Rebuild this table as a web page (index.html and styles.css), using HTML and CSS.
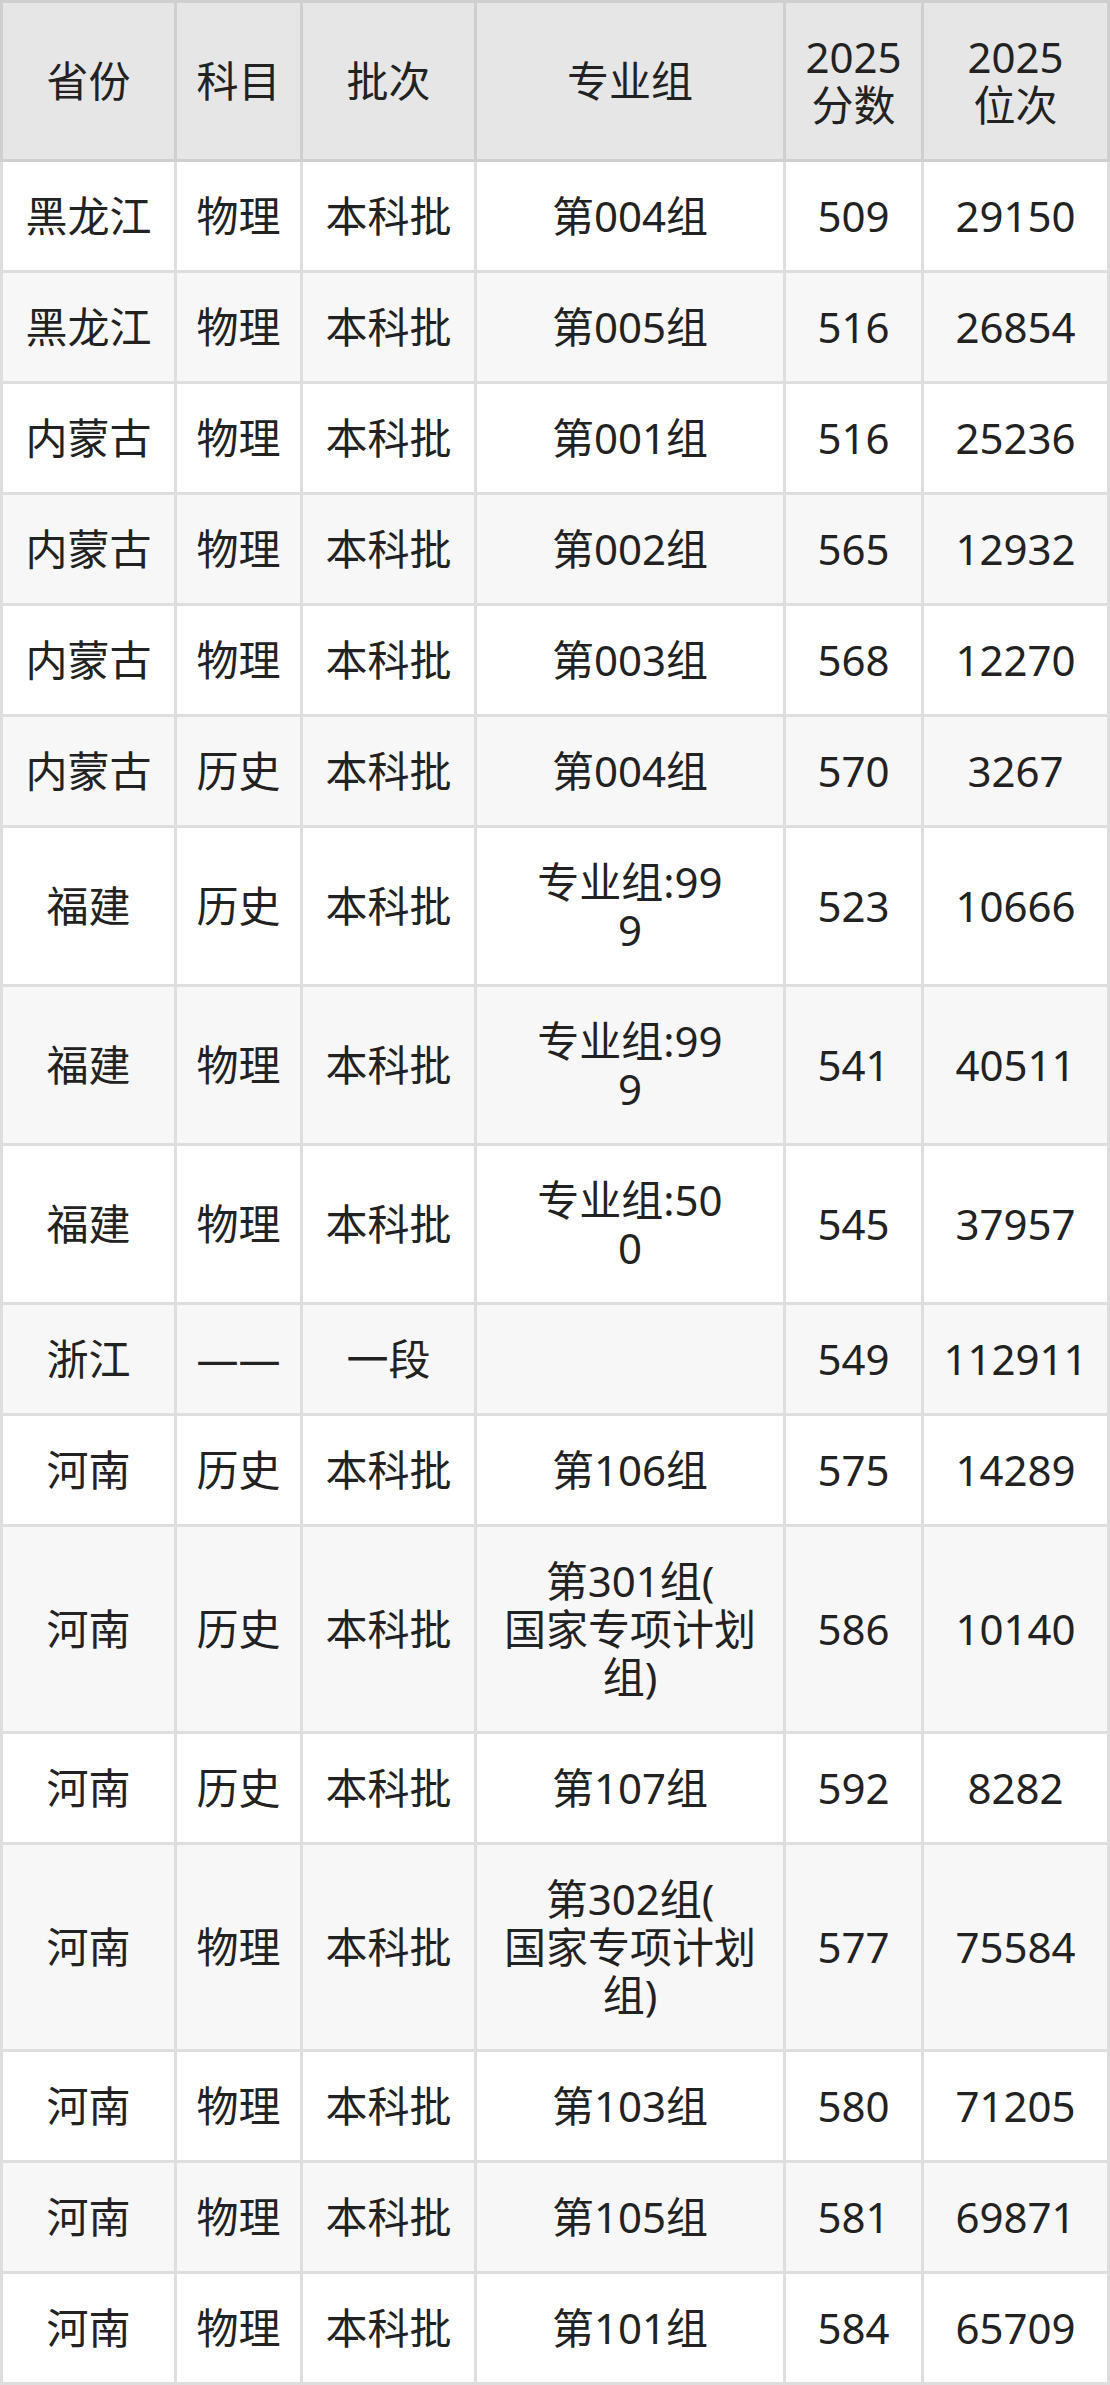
FILE: index.html
```html
<!DOCTYPE html>
<html lang="zh-CN">
<head>
<meta charset="utf-8">
<title>2025 分数位次</title>
<link rel="stylesheet" href="styles.css">
</head>
<body>
<table class="score-table">
  <colgroup>
    <col class="c-prov">
    <col class="c-subj">
    <col class="c-batch">
    <col class="c-group">
    <col class="c-score">
    <col class="c-rank">
  </colgroup>
  <thead>
    <tr>
      <th>省份</th>
      <th>科目</th>
      <th>批次</th>
      <th>专业组</th>
      <th>2025<br>分数</th>
      <th>2025<br>位次</th>
    </tr>
  </thead>
  <tbody>
    <tr><td>黑龙江</td><td>物理</td><td>本科批</td><td>第004组</td><td>509</td><td>29150</td></tr>
    <tr><td>黑龙江</td><td>物理</td><td>本科批</td><td>第005组</td><td>516</td><td>26854</td></tr>
    <tr><td>内蒙古</td><td>物理</td><td>本科批</td><td>第001组</td><td>516</td><td>25236</td></tr>
    <tr><td>内蒙古</td><td>物理</td><td>本科批</td><td>第002组</td><td>565</td><td>12932</td></tr>
    <tr><td>内蒙古</td><td>物理</td><td>本科批</td><td>第003组</td><td>568</td><td>12270</td></tr>
    <tr><td>内蒙古</td><td>历史</td><td>本科批</td><td>第004组</td><td>570</td><td>3267</td></tr>
    <tr><td>福建</td><td>历史</td><td>本科批</td><td>专业组:99<br>9</td><td>523</td><td>10666</td></tr>
    <tr><td>福建</td><td>物理</td><td>本科批</td><td>专业组:99<br>9</td><td>541</td><td>40511</td></tr>
    <tr><td>福建</td><td>物理</td><td>本科批</td><td>专业组:50<br>0</td><td>545</td><td>37957</td></tr>
    <tr><td>浙江</td><td>——</td><td>一段</td><td></td><td>549</td><td>112911</td></tr>
    <tr><td>河南</td><td>历史</td><td>本科批</td><td>第106组</td><td>575</td><td>14289</td></tr>
    <tr><td>河南</td><td>历史</td><td>本科批</td><td>第301组(<br>国家专项计划<br>组)</td><td>586</td><td>10140</td></tr>
    <tr><td>河南</td><td>历史</td><td>本科批</td><td>第107组</td><td>592</td><td>8282</td></tr>
    <tr><td>河南</td><td>物理</td><td>本科批</td><td>第302组(<br>国家专项计划<br>组)</td><td>577</td><td>75584</td></tr>
    <tr><td>河南</td><td>物理</td><td>本科批</td><td>第103组</td><td>580</td><td>71205</td></tr>
    <tr><td>河南</td><td>物理</td><td>本科批</td><td>第105组</td><td>581</td><td>69871</td></tr>
    <tr><td>河南</td><td>物理</td><td>本科批</td><td>第101组</td><td>584</td><td>65709</td></tr>
  </tbody>
</table>
</body>
</html>
```

FILE: styles.css
```css
html, body {
  margin: 0;
  padding: 0;
  background: #ffffff;
}

body {
  font-family: "Noto Sans", "Noto Sans CJK SC", sans-serif;
  font-size: 42px;
  line-height: 48px;
  color: #222222;
}

.score-table {
  width: 1110px;
  table-layout: fixed;
  border-collapse: collapse;
}

.c-prov { width: 174px; }
.c-subj { width: 126px; }
.c-batch { width: 174px; }
.c-group { width: 309px; }
.c-score { width: 138px; }
.c-rank { width: 186px; }

.score-table th,
.score-table td {
  padding: 30px 0;
  text-align: center;
  vertical-align: middle;
  font-weight: 400;
  white-space: nowrap;
}

.score-table th {
  background: #e6e6e6;
  border: 3px solid #cfcfcf;
}

.score-table td {
  border: 3px solid #dedede;
}

.score-table tbody tr:nth-child(even) td {
  background: #f7f7f7;
}
```
